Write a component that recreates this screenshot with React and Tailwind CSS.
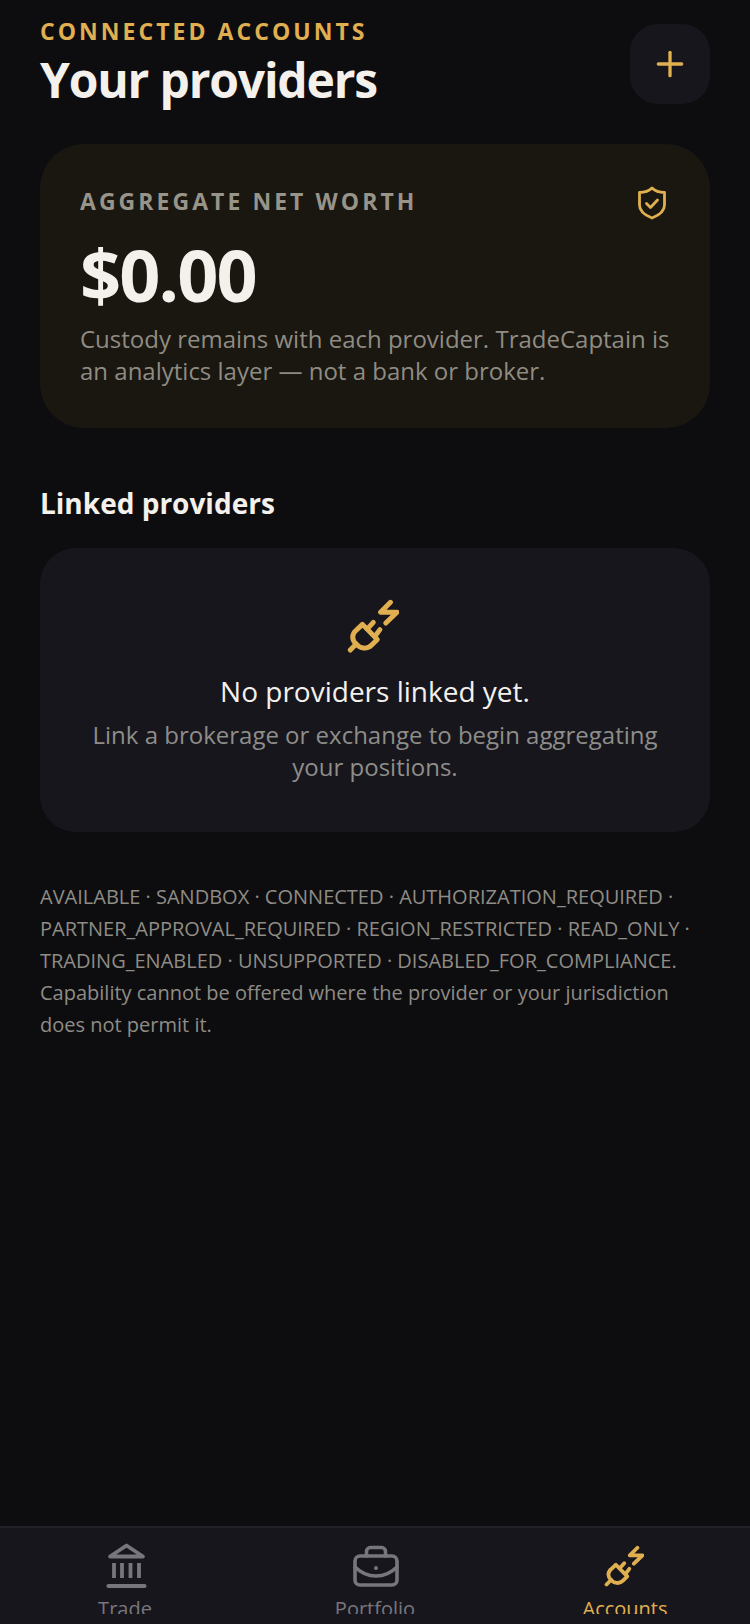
import React from "react";
import { Plus } from "lucide-react";

const PlugBolt = ({ width = 52, height = 56 }) => (
  <svg width={width} height={height} viewBox="80 42 158 170" fill="none" stroke="currentColor" strokeWidth="15" strokeLinecap="round" strokeLinejoin="round">
    <path d="M108 182L90 200" />
    <path d="M127 122L172 168L155 185C140 200 120 195 108 182C95 170 92 152 110 138Z" />
    <path d="M142 136L160 116" />
    <path d="M165 158L180 138" />
    <path d="M212 55L182 85L232 85L198 118" />
  </svg>
);

const Bank = () => (
  <svg width="42" height="46" viewBox="0 0 42 46" fill="none" stroke="currentColor" strokeLinecap="round" strokeLinejoin="round">
    <path d="M4 13.500L20.500 2.500L37 13.500Z" strokeWidth="3.800" />
    <path d="M8 20v15M16 20v15M24.500 20v15M33 20v15" strokeWidth="3.800" strokeLinecap="butt" />
    <path d="M2.500 43h36" strokeWidth="4.200" />
  </svg>
);

const Briefcase = () => (
  <svg width="46" height="42" viewBox="0 0 46 42" fill="none" stroke="currentColor" strokeWidth="3.600" strokeLinecap="round" strokeLinejoin="round">
    <rect x="2" y="11" width="42" height="29" rx="5" />
    <path d="M13.500 11V6.500a4 4 0 0 1 4-4h11a4 4 0 0 1 4 4V11" />
    <path d="M2 22c6 6 13 9 21 9s15-3 21-9" />
    <path d="M23 23v.2" strokeWidth="3.800" />
  </svg>
);

const Shield = () => (
  <svg width="30" height="34" viewBox="0 0 30 34" fill="none" stroke="currentColor" strokeWidth="2.800" strokeLinecap="round" strokeLinejoin="round">
    <path d="M15 2c2.500 2.500 7 4.500 12.500 4.500V19c0 6-6 10.500-12.500 13C8.500 29.500 2.500 25 2.500 19V6.500C8 6.500 12.500 4.500 15 2z" />
    <path d="M9.500 17.500l4 4 7-7.500" />
  </svg>
);

const NavItem = ({ icon, label, active, iconClass }) => (
  <div className={`flex flex-col items-center gap-[6px] ${active ? "text-[#e0b050]" : "text-[#77767c]"}`}>
    <div className={`h-[46px] flex items-center justify-center ${iconClass}`}>{icon}</div>
    <span className="text-[20px] leading-[28px]">{label}</span>
  </div>
);

export default function App() {
  return (
    <div className="h-[1624px] flex flex-col bg-[#0d0d10] overflow-hidden font-['Open_Sans',sans-serif]">
      <main className="flex-1 px-10">
        <div className="flex items-start justify-between pt-[16px]">
          <div>
            <div className="text-[23px] leading-[30px] font-bold tracking-[3.050px] text-[#e0b050]">CONNECTED ACCOUNTS</div>
            <h1 className="text-[48px] leading-[68px] font-bold tracking-[-1.200px] text-[#f4f1ec]">Your providers</h1>
          </div>
          <button className="w-20 h-20 mt-[8px] rounded-[28px] bg-[#17161c] flex items-center justify-center text-[#e0b050]">
            <Plus size={40} strokeWidth={2} />
          </button>
        </div>

        <section className="mt-[30px] h-[284px] rounded-[44px] bg-[#1a1610] px-10 pt-[42px]">
          <div className="flex items-start justify-between">
            <span className="text-[23px] leading-[30px] font-bold tracking-[3.050px] text-[#97948a]">AGGREGATE NET WORTH</span>
            <span className="text-[#e0b050] mr-[3px]"><Shield /></span>
          </div>
          <div className="mt-[12px] text-[72px] leading-[84px] font-bold tracking-[-1.900px] text-[#f4f1ec]">$0.00</div>
          <p className="mt-[7px] text-[24px] leading-[32px] text-[#8f8c83]">
            Custody remains with each provider. TradeCaptain is an analytics layer — not a bank or broker.
          </p>
        </section>

        <h2 className="mt-[57px] text-[28px] leading-[36px] font-bold text-[#f4f1ec]">Linked providers</h2>

        <section className="mt-[27px] h-[284px] rounded-[36px] bg-[#17161c] px-10 pt-[50px] flex flex-col items-center text-center">
          <span className="text-[#e0b050] mr-[5px]"><PlugBolt /></span>
          <div className="mt-[19px] text-[28px] leading-[36px] text-[#f4f1ec]">No providers linked yet.</div>
          <p className="mt-[10px] text-[24px] leading-[32px] text-[#8e8d8a]">Link a brokerage or exchange to begin aggregating your positions.</p>
        </section>

        <p className="mt-[49px] text-[20px] leading-[32px] text-[#8f8c85]">
          AVAILABLE · SANDBOX · CONNECTED · AUTHORIZATION_REQUIRED · PARTNER_APPROVAL_REQUIRED · REGION_RESTRICTED · READ_ONLY · TRADING_ENABLED · UNSUPPORTED · DISABLED_FOR_COMPLIANCE. Capability cannot be offered where the provider or your jurisdiction does not permit it.
        </p>
      </main>

      <nav className="h-[98px] shrink-0 bg-[#17161c] border-t-2 border-[#212127]">
        <div className="h-[86px] overflow-hidden grid grid-cols-3 pt-[15px]">
          <NavItem icon={<Bank />} label="Trade" iconClass="ml-[3px]" />
          <NavItem icon={<Briefcase />} label="Portfolio" iconClass="ml-[2px]" />
          <NavItem icon={<PlugBolt width={40} height={44} />} label="Accounts" active iconClass="mr-[2px]" />
        </div>
      </nav>
    </div>
  );
}
